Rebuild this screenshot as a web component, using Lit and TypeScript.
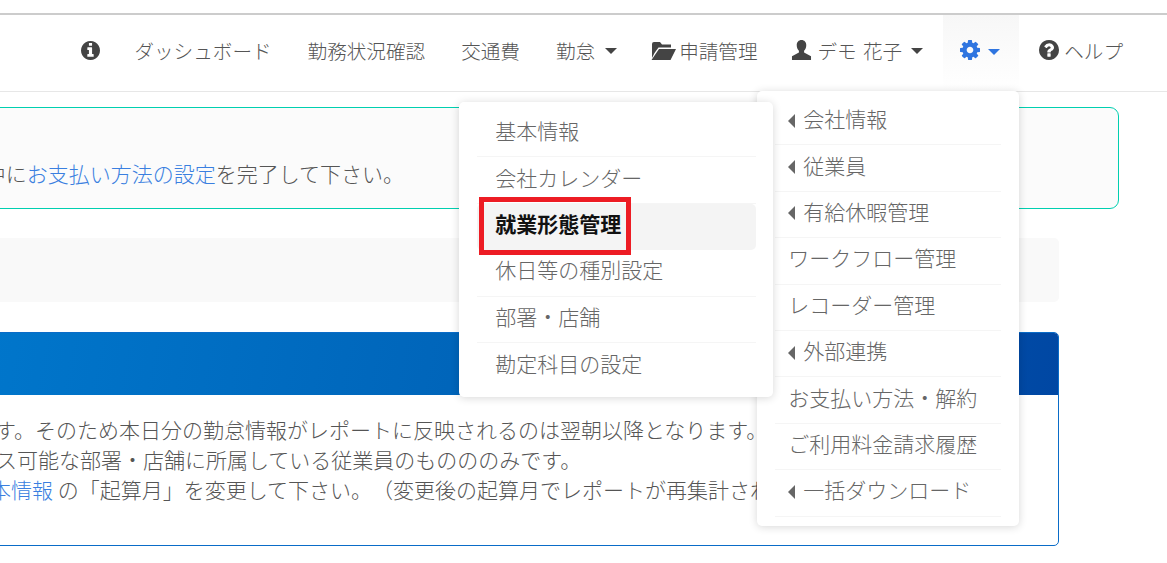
import { LitElement, html, css, svg } from "lit";
import { customElement } from "lit/decorators.js";

const info = svg`<path d="M1152 1376v-160q0-14-9-23t-23-9h-96v-512q0-14-9-23t-23-9h-320q-14 0-23 9t-9 23v160q0 14 9 23t23 9h96v320h-96q-14 0-23 9t-9 23v160q0 14 9 23t23 9h448q14 0 23-9t9-23zm-128-896v-160q0-14-9-23t-23-9h-192q-14 0-23 9t-9 23v160q0 14 9 23t23 9h192q14 0 23-9t9-23zm640 416q0 209-103 385.5t-279.5 279.5-385.5 103-385.5-103-279.5-279.5-103-385.5 103-385.5 279.5-279.5 385.5-103 385.5 103 279.5 279.5 103 385.5z"/>`;
const question = svg`<path d="M1024 1376v-192q0-14-9-23t-23-9h-192q-14 0-23 9t-9 23v192q0 14 9 23t23 9h192q14 0 23-9t9-23zm256-672q0-88-55.5-163t-138.5-116-170-41q-243 0-371 213-15 24 8 42l132 100q7 6 19 6 16 0 25-12 53-68 86-92 34-24 86-24 48 0 85.5 26t37.5 59q0 38-20 61t-68 45q-63 28-115.5 86.5t-52.5 125.5v36q0 14 9 23t23 9h192q14 0 23-9t9-23q0-19 21.5-49.5t54.5-49.5q32-18 49-28.5t46-35 44.5-48 28-60.5 12.5-81zm384 192q0 209-103 385.5t-279.5 279.5-385.5 103-385.5-103-279.5-279.5-103-385.5 103-385.5 279.5-279.5 385.5-103 385.5 103 279.5 279.5 103 385.5z"/>`;
const cog = svg`<path d="M1152 896q0-106-75-181t-181-75-181 75-75 181 75 181 181 75 181-75 75-181zm512-109v222q0 12-8 23t-20 13l-185 28q-19 54-39 91 35 50 107 138 10 12 10 25t-9 23q-27 37-99 108t-94 71q-12 0-26-9l-138-108q-44 23-91 38-16 136-29 186-7 28-36 28h-222q-14 0-24.5-8.5t-11.5-21.5l-28-184q-49-16-90-37l-141 107q-10 9-25 9-14 0-25-11-126-114-165-168-7-10-7-23 0-12 8-23 15-21 51-66.5t54-70.5q-27-50-41-99l-183-27q-13-2-21-12.5t-8-23.5v-222q0-12 8-23t19-13l186-28q14-46 39-92-40-57-107-138-10-12-10-24 0-10 9-23 26-36 98.5-107.5t94.5-71.5q13 0 26 10l138 107q44-23 91-38 16-136 29-186 7-28 36-28h222q14 0 24.5 8.5t11.5 21.5l28 184q49 16 90 37l142-107q9-9 24-9 13 0 25 10 129 119 165 170 7 8 7 22 0 12-8 23-15 21-51 66.5t-54 70.5q26 50 41 98l183 28q13 2 21 12.5t8 23.5z"/>`;

const icon = (p: unknown, cls: string, vb = "128 128 1536 1536") =>
  html`<svg class="ico ${cls}" viewBox=${vb} fill="currentColor">${p}</svg>`;

const rightItems: [string, boolean][] = [
  ["会社情報", true], ["従業員", true], ["有給休暇管理", true], ["ワークフロー管理", false],
  ["レコーダー管理", false], ["外部連携", true], ["お支払い方法・解約", false],
  ["ご利用料金請求履歴", false], ["一括ダウンロード", true],
];
const leftItems = ["基本情報", "会社カレンダー", "就業形態管理", "休日等の種別設定", "部署・店舗", "勘定科目の設定"];

@customElement("app-root")
export class AppRoot extends LitElement {
  static styles = css`
    :host {
      display: block; width: 1167px; height: 563px; overflow: hidden; position: relative;
      background: #fff; color: #555; font-weight: 300; text-spacing-trim: space-all;
      font-family: "Noto Sans CJK JP", "Noto Sans", sans-serif;
    }
    .topline { margin-top: 13px; height: 2px; background: #ccc; }
    nav {
      display: flex; justify-content: flex-end; align-items: stretch; height: 76px;
      padding-right: 26px; border-bottom: 1px solid #e7e7e7; font-size: 19.6px;
    }
    .nav-item { display: flex; align-items: center; padding: 0 18px 5px; white-space: nowrap; position: relative; }
    .nav-item.info { padding-right: 16px; }
    .nav-item.folder { margin-left: -2px; }
    .nav-item.user { margin-left: -3px; padding-right: 20px; word-spacing: 2px; }
    .nav-item.active {
      box-sizing: border-box; width: 76px; padding: 0 0 5px 17px; margin-right: 2px;
      background: linear-gradient(#f7f7f7, #fff); color: #2f75e0; z-index: 5;
    }
    .ico { display: block; flex: none; }
    .i-info { width: 19px; height: 19px; color: #444; }
    .i-q { width: 20px; height: 20px; color: #444; margin: -1px 5px 0 0; }
    .i-cog { width: 20px; height: 20px; margin: -1px 8px 0 0; color: #2f75e0; }
    .i-user { width: 21px; height: 20px; color: #444; margin: -1px 6px 0 0; }
    .i-folder { width: 25px; height: 19px; color: #444; margin-right: 3px; }
    .caret {
      display: block; width: 0; height: 0; margin-left: 9px; flex: none;
      border-left: 6px solid transparent; border-right: 6px solid transparent; border-top: 6px solid #444;
    }
    .kintai .caret { margin-left: 10px; }
    .active .caret { border-top-color: #2f75e0; margin: 2px 0 0; }
    main { display: flex; flex-direction: column; overflow: hidden; }
    .alert {
      margin: 15px 48px 0 -40px; height: 102px; box-sizing: border-box; background: #fbfbfb;
      border: 1px solid #00cfb0; border-radius: 9px; padding: 50px 0 0 23.7px;
      font-size: 21px; line-height: 30px; white-space: nowrap; overflow: hidden;
    }
    a { color: #3a7fe0; text-decoration: none; }
    .well { margin: 29px 108px 0 -40px; height: 64px; background: #f9f9f9; border-radius: 5px; }
    .panel {
      margin: 30px 108px 0 -40px; height: 214px; box-sizing: border-box; overflow: hidden;
      border: 1px solid #0a6cc8; border-radius: 5px; background: #fff;
    }
    .panel-head { height: 62px; background: linear-gradient(100deg, #0077cc 0%, #0063b8 50%, #0047a3 100%); }
    .panel-body { padding: 19px 0 0 0; font-size: 21px; line-height: 30px; white-space: nowrap; }
    .panel-body div:nth-child(1) { margin-left: 34px; }
    .panel-body div:nth-child(2) { margin-left: 35px; }
    .panel-body div:nth-child(3) { margin-left: 29px; }
    .menu {
      position: absolute; background: #fff; border-radius: 5px; box-sizing: border-box; color: #666;
      box-shadow: 0 1px 8px rgba(0,0,0,.16); font-size: 21px; font-weight: 300; word-spacing: 0;
    }
    .menu-r { top: 76px; right: 0; width: 262px; height: 435px; padding: 8px 18px 0; }
    .menu-l { top: 87px; right: 246px; width: 314px; height: 295px; padding: 9px 17px 0 18px; z-index: 2; }
    .row {
      height: 46.4px; box-sizing: border-box; display: flex; align-items: center; gap: 8px;
      padding: 0 0 7px 13px; border-bottom: 1px solid #f5f5f5; position: relative; white-space: nowrap;
    }
    .menu-l .row { padding-left: 18px; }
    .menu-l .row:last-child { border-bottom: none; }
    .row.sel { background: #f4f4f4; border-radius: 5px; border-bottom: none; color: #111; font-weight: 700; }
    .mark {
      position: absolute; left: 2px; top: -7px; width: 152px; height: 58px; box-sizing: border-box;
      border: 5px solid #ed1c24; pointer-events: none;
    }
    .lc {
      width: 0; height: 0; flex: none; border-top: 7px solid transparent; border-bottom: 7px solid transparent;
      border-right: 7px solid #666; margin-top: 5px;
    }
  `;

  render() {
    return html`
      <div class="topline"></div>
      <nav>
        <div class="nav-item info">${icon(info, "i-info")}</div>
        <div class="nav-item">ダッシュボード</div>
        <div class="nav-item">勤務状況確認</div>
        <div class="nav-item">交通費</div>
        <div class="nav-item kintai">勤怠<span class="caret"></span></div>
        <div class="nav-item folder">
          <svg class="ico i-folder" viewBox="0 0 25 19" fill="currentColor"><path d="M3 1h6l2 2.500h9v3H7.500L3.500 12 1 17V3q0-2 2-2zM8 8h17l-5.500 11H0.500z"/></svg>申請管理
        </div>
        <div class="nav-item user">
          <svg class="ico i-user" viewBox="0 0 21 21" fill="currentColor"><path d="M10.500 0c3 0 5 2.200 5 5.500 0 2.500-1 4.500-2.300 5.700v1.800l7.300 4V21H.5v-4l7.300-4v-1.800C6.500 10 5.500 8 5.500 5.500c0-3.300 2-5.500 5-5.500z"/></svg>デモ 花子<span class="caret"></span>
        </div>
        <div class="nav-item active">
          ${icon(cog, "i-cog")}<span class="caret"></span>
          <div class="menu menu-r">
            ${rightItems.map(([t, sub]) => html`<div class="row">${sub ? html`<span class="lc"></span>` : ""}${t}</div>`)}
          </div>
          <div class="menu menu-l">
            ${leftItems.map((t, i) => html`<div class="row ${i === 2 ? "sel" : ""}">${t}${i === 2 ? html`<span class="mark"></span>` : ""}</div>`)}
          </div>
        </div>
        <div class="nav-item">${icon(question, "i-q")}ヘルプ</div>
      </nav>
      <main>
        <div class="alert">中に<a href="#">お支払い方法の設定</a>を完了して下さい。</div>
        <div class="well"></div>
        <div class="panel">
          <div class="panel-head"></div>
          <div class="panel-body">
            <div>す。そのため本日分の勤怠情報がレポートに反映されるのは翌朝以降となります。</div>
            <div>ス可能な部署・店舗に所属している従業員のものののみです。</div>
            <div><a href="#">本情報</a> の「起算月」を変更して下さい。（変更後の起算月でレポートが再集計されます。）</div>
          </div>
        </div>
      </main>
    `;
  }
}
